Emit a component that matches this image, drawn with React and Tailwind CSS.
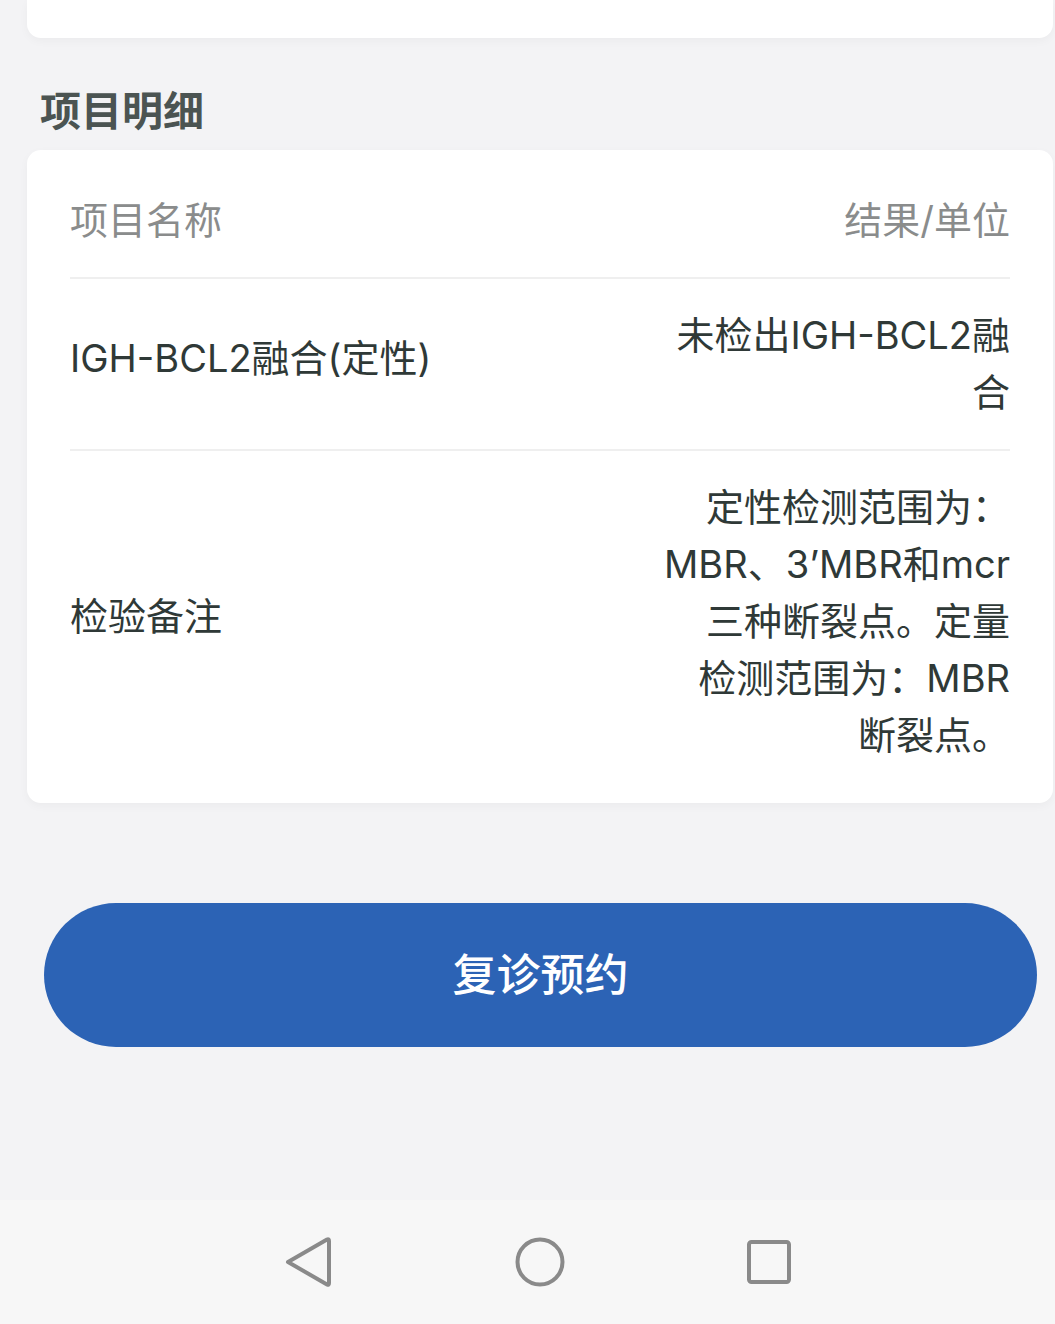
import React from "react";

const rows = [
  {
    name: "IGH-BCL2融合(定性)",
    lines: ["未检出IGH-BCL2融", "合"],
  },
  {
    name: "检验备注",
    lines: [
      "定性检测范围为：",
      "MBR、3’MBR和mcr",
      "三种断裂点。定量",
      "检测范围为：MBR",
      "断裂点。",
    ],
  },
];

export default function App() {
  return (
    <div
      className="h-[1324px] w-full bg-[#f3f3f5] flex flex-col overflow-hidden"
      style={{ fontFamily: 'Inter, "Noto Sans CJK SC", "Noto Sans", sans-serif' }}
    >
      {/* top card remnant */}
      <div className="ml-[27px] mr-[2px] h-[38px] bg-white rounded-b-[14px] shadow-[0_3px_10px_rgba(0,0,0,0.035)]" />

      {/* section heading */}
      <div className="mt-[45px] pl-[40px] text-[41px] leading-[57px] font-bold text-[#4b5452]">
        项目明细
      </div>

      {/* detail card */}
      <div className="mt-[10px] ml-[27px] mr-[2px] bg-white rounded-[14px] px-[43px] pt-[14px] pb-[11px] shadow-[0_3px_10px_rgba(0,0,0,0.035)]">
        <div className="flex justify-between py-[28px] border-b-2 border-[#efefef] text-[38px] leading-[57px] text-[#8a8c8c]">
          <span>项目名称</span>
          <span>结果/单位</span>
        </div>
        {rows.map((r, i) => (
          <div
            key={i}
            className={
              "flex justify-between items-center py-[28px] text-[38px] leading-[57px] text-[#2f3937] " +
              (i < rows.length - 1 ? "border-b-2 border-[#efefef]" : "")
            }
          >
            <span className="mb-[11px] whitespace-nowrap">{r.name}</span>
            <div className="text-right">
              {r.lines.map((l, j) => (
                <div key={j} className="whitespace-nowrap">
                  {l}
                </div>
              ))}
            </div>
          </div>
        ))}
      </div>

      {/* button */}
      <button className="mt-[100px] ml-[44px] w-[993px] h-[144px] rounded-full bg-[#2c63b5] text-white text-[44px] font-medium flex items-center justify-center">
        复诊预约
      </button>

      {/* nav bar */}
      <div className="mt-auto h-[124px] bg-[#f7f7f7] flex items-center justify-center">
        <svg width="1055" height="124" viewBox="0 0 1055 124" className="block">
          <path
            d="M288 62 L327 39.5 Q329 38.5 329 41 L329 83 Q329 85.5 327 84.5 Z"
            fill="none"
            stroke="#8a8a8a"
            strokeWidth="4"
            strokeLinejoin="round"
          />
          <circle cx="540" cy="62" r="22.5" fill="none" stroke="#8a8a8a" strokeWidth="4" />
          <rect x="749" y="42" width="40" height="40" rx="2.5" fill="none" stroke="#8a8a8a" strokeWidth="4" />
        </svg>
      </div>
    </div>
  );
}
